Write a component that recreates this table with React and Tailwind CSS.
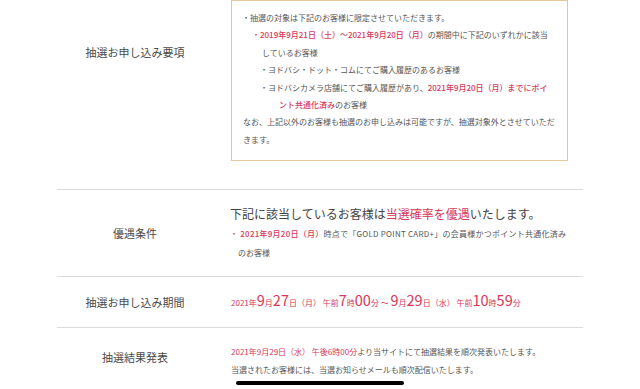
import React from "react";

const RED = "text-[#d63859]";

const Big = ({ children }) => <span className="text-[14.5px] leading-none">{children}</span>;

export default function App() {
  return (
    <div className="relative w-[640px] h-[389px] overflow-hidden bg-white text-[#555] font-['Noto_Sans_CJK_JP',sans-serif]">
      <div className="ml-[57px] w-[526px]">
        {/* Row 1: requirements box */}
        <div className="flex items-start">
          <div className="w-[156px] pt-[44px] text-center text-[11px] leading-[16px] text-[#4a4a4a]">抽選お申し込み要項</div>
          <div className="ml-[18px] w-[337px] border border-[#e8c7a0] pl-[10px] pr-[10px] pt-[8px] pb-[12px] text-[8px] leading-[17.4px] whitespace-nowrap">
            <div>・抽選の対象は下記のお客様に限定させていただきます。</div>
            <div className="pl-[20px] -indent-[10px]">
              <span className={RED}>・</span>
              <span className={`${RED} font-medium`}>2019年9月21日（土）～2021年9月20日（月）</span>の期間中に下記のいずれかに該当
              <br />
              しているお客様
            </div>
            <div className="pl-[37px] -indent-[19px]">
              ・ヨドバシ・ドット・コムにてご購入履歴のあるお客様
            </div>
            <div className="pl-[37px] -indent-[19px]">
              ・ヨドバシカメラ店舗にてご購入履歴があり、<span className={`${RED} font-medium`}>2021年9月20日（月）までにポイ</span>
              <br />
              <span className={`${RED} font-medium`}>ント共通化済み</span>のお客様
            </div>
            <div className="pl-[1px]">
              なお、上記以外のお客様も抽選のお申し込みは可能ですが、抽選対象外とさせていただ
              <br />
              きます。
            </div>
          </div>
        </div>

        <div className="mt-[28px] border-t border-[#dcdcdc]" />

        {/* Row 2 */}
        <div className="flex h-[86px] items-center">
          <div className="w-[156px] text-center text-[11px] leading-[16px] text-[#4a4a4a]">優遇条件</div>
          <div className="ml-[17px] whitespace-nowrap">
            <div className="text-[12px] leading-[20px] text-[#444]">
              下記に該当しているお客様は<span className={RED}>当選確率を優遇</span>いたします。
            </div>
            <div className="text-[8px] leading-[19.5px] tracking-[0.25px]">
              <span className={RED}>・ </span>
              <span className={`${RED} font-medium`}>2021年9月20日（月）</span>時点で「GOLD POINT CARD+」の会員様かつポイント共通化済み
            </div>
            <div className="pl-[8px] text-[8px] leading-[19.5px]">のお客様</div>
          </div>
        </div>

        <div className="border-t border-[#dcdcdc]" />

        {/* Row 3 */}
        <div className="flex h-[50px] items-center">
          <div className="w-[156px] text-center text-[11px] leading-[16px] text-[#4a4a4a]">抽選お申し込み期間</div>
          <div className={`ml-[18px] whitespace-nowrap text-[8px] leading-[16px] ${RED}`}>
            2021年<Big>9</Big>月<Big>27</Big>日（月） 午前<Big>7</Big>時<Big>00</Big>分 ～ <Big>9</Big>月<Big>29</Big>日（水） 午前<Big>10</Big>時<Big>59</Big>分
          </div>
        </div>

        <div className="border-t border-[#dcdcdc]" />

        {/* Row 4 */}
        <div className="flex items-start">
          <div className="w-[156px] pt-[21px] text-center text-[11px] leading-[16px] text-[#4a4a4a]">抽選結果発表</div>
          <div className="ml-[18px] pt-[15px] whitespace-nowrap text-[8px] leading-[18px]">
            <div>
              <span className={RED}>2021年9月29日（水） 午後6時00分</span>より当サイトにて抽選結果を順次発表いたします。
            </div>
            <div>当選されたお客様には、当選お知らせメールも順次配信いたします。</div>
          </div>
        </div>
      </div>

      {/* home indicator */}
      <div className="absolute left-[236px] top-[381px] h-[4px] w-[168px] rounded-full bg-black" />
    </div>
  );
}
